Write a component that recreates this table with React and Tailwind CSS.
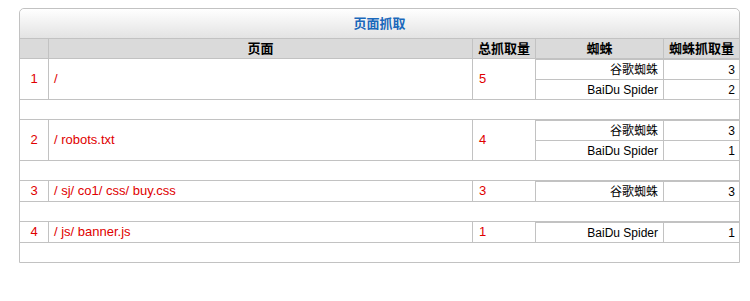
import React from 'react';

const rows = [
  { id: 1, page: '/', total: 5, spiders: [['谷歌蜘蛛', 3], ['BaiDu Spider', 2]] },
  { id: 2, page: '/ robots.txt', total: 4, spiders: [['谷歌蜘蛛', 3], ['BaiDu Spider', 1]] },
  { id: 3, page: '/ sj/ co1/ css/ buy.css', total: 3, spiders: [['谷歌蜘蛛', 3]] },
  { id: 4, page: '/ js/ banner.js', total: 1, spiders: [['BaiDu Spider', 1]] },
];

const font = { fontFamily: '"Liberation Sans", Arial, "Noto Sans CJK SC", sans-serif' };

const App = () => {
  return (
    <div className="w-[750px] h-[301px] bg-white pt-[8px] pl-[19px]" style={font}>
      <div className="w-[721px] border border-[#c2c2c2] rounded-t-[5px] text-[12px]">
        {/* Title bar */}
        <div className="h-[30px] border-b border-[#c2c2c2] rounded-t-[5px] bg-gradient-to-b from-white to-[#e3e3e3] flex items-center justify-center">
          <span className="text-[13px] font-bold text-[#1a68bb]">页面抓取</span>
        </div>

        {/* Column headers */}
        <div className="flex h-[20px] border-b border-[#c2c2c2] bg-[#dadada] font-bold text-[13px] text-black">
          <div className="w-[29px] border-r border-[#c2c2c2]" />
          <div className="w-[424px] border-r border-[#c2c2c2] flex items-center justify-center">页面</div>
          <div className="w-[63px] border-r border-[#c2c2c2] flex items-center justify-center">总抓取量</div>
          <div className="w-[128px] border-r border-[#c2c2c2] flex items-center justify-center">蜘蛛</div>
          <div className="flex-1 flex items-center justify-center">蜘蛛抓取量</div>
        </div>

        {rows.map((r) => (
          <React.Fragment key={r.id}>
            <div className="flex border-b border-[#c2c2c2]">
              <div className="w-[29px] border-r border-[#c2c2c2] flex items-center justify-center text-[#e00000] text-[13px]">
                {r.id}
              </div>
              <div className="w-[424px] border-r border-[#c2c2c2] flex items-center pl-[5px] text-[#e00000] text-[13px]">
                {r.page}
              </div>
              <div className="w-[63px] border-r border-[#c2c2c2] flex items-center pl-[6px] text-[#e00000] text-[13px]">
                {r.total}
              </div>
              <div className="flex-1 border-t border-[#c2c2c2] flex flex-col">
                {r.spiders.map(([name, count], i) => (
                  <div
                    key={name}
                    className={`flex h-[19px] ${i < r.spiders.length - 1 ? 'box-content border-b border-[#c2c2c2]' : ''}`}
                  >
                    <div className="w-[128px] border-r border-[#c2c2c2] flex items-center justify-end pr-[5px] text-black">
                      {name}
                    </div>
                    <div className="flex-1 flex items-center justify-end pr-[4px] text-black">{count}</div>
                  </div>
                ))}
              </div>
            </div>
            {r.id < rows.length ? (
              <div className="h-[20px] border-b border-[#c2c2c2]" />
            ) : (
              <div className="h-[19px]" />
            )}
          </React.Fragment>
        ))}
      </div>
    </div>
  );
};

export default App;
